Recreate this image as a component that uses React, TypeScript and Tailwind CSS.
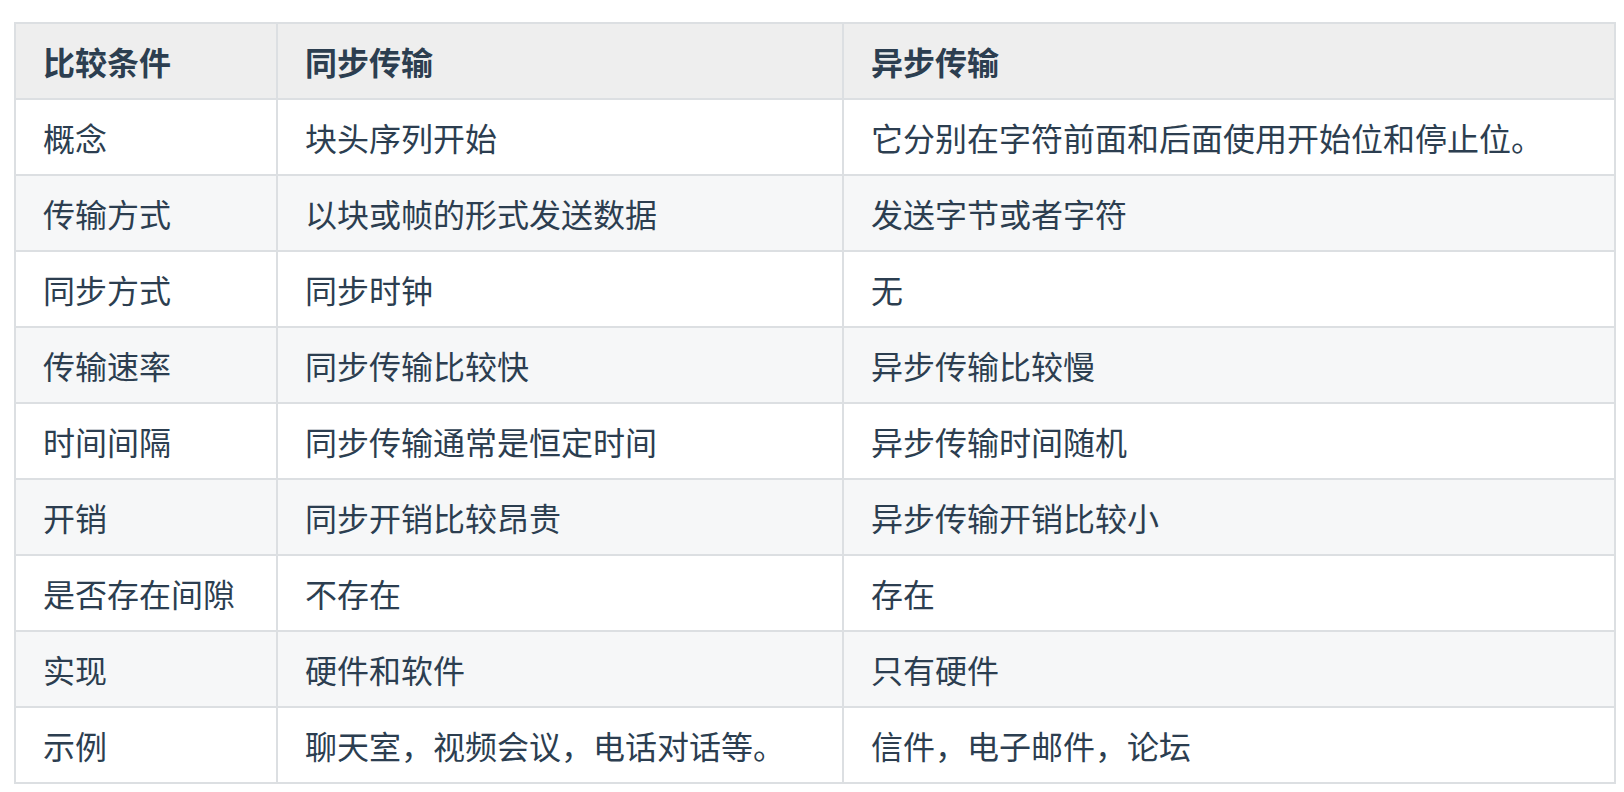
import React from 'react';

type Row = {
  label: string;
  sync: string;
  async: string;
};

const rows: Row[] = [
  { label: '概念', sync: '块头序列开始', async: '它分别在字符前面和后面使用开始位和停止位。' },
  { label: '传输方式', sync: '以块或帧的形式发送数据', async: '发送字节或者字符' },
  { label: '同步方式', sync: '同步时钟', async: '无' },
  { label: '传输速率', sync: '同步传输比较快', async: '异步传输比较慢' },
  { label: '时间间隔', sync: '同步传输通常是恒定时间', async: '异步传输时间随机' },
  { label: '开销', sync: '同步开销比较昂贵', async: '异步传输开销比较小' },
  { label: '是否存在间隙', sync: '不存在', async: '存在' },
  { label: '实现', sync: '硬件和软件', async: '只有硬件' },
  { label: '示例', sync: '聊天室，视频会议，电话对话等。', async: '信件，电子邮件，论坛' },
];

const cell = 'h-[76px] border-2 border-[#dcdfe2] pl-[27px] pr-4 py-0 text-left align-middle';

const App = () => {
  return (
    <div
      className="min-h-[792px] bg-white pl-[14px] pt-[22px] text-[32px] leading-[1.5] text-[#2c3e50]"
      style={{ fontFamily: '"Noto Sans CJK SC", "Noto Sans", sans-serif' }}
    >
      <table className="w-[1600px] table-fixed border-collapse">
        <colgroup>
          <col className="w-[262px]" />
          <col className="w-[566px]" />
          <col className="w-[772px]" />
        </colgroup>
        <thead>
          <tr className="bg-[#eeeeee]">
            <th className={`${cell} font-bold`}>比较条件</th>
            <th className={`${cell} font-bold`}>同步传输</th>
            <th className={`${cell} font-bold`}>异步传输</th>
          </tr>
        </thead>
        <tbody>
          {rows.map((row, i) => (
            <tr key={row.label} className={i % 2 === 1 ? 'bg-[#f6f7f8]' : 'bg-white'}>
              <td className={cell}>{row.label}</td>
              <td className={cell}>{row.sync}</td>
              <td className={cell}>{row.async}</td>
            </tr>
          ))}
        </tbody>
      </table>
    </div>
  );
};

export default App;
